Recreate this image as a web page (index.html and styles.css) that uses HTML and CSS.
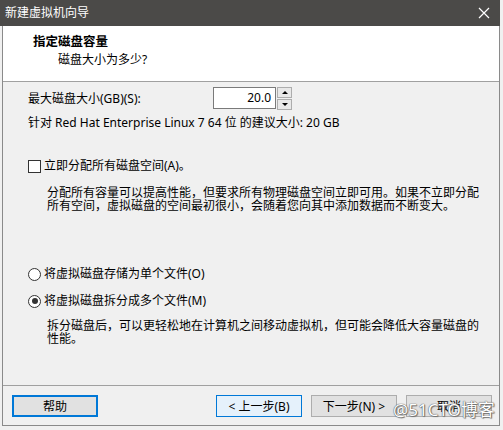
FILE: index.html
```html
<!DOCTYPE html>
<html lang="zh-CN">
<head>
    <meta charset="UTF-8">
    <title>新建虚拟机向导</title>
    <link rel="stylesheet" href="styles.css">
</head>
<body>
    <div class="window">
        <div class="titlebar">
            <span class="title">新建虚拟机向导</span>
            <svg class="close" width="12" height="12" viewBox="0 0 12 12">
                <path d="M1 1 L11 11 M11 1 L1 11" stroke="#fff" stroke-width="1.2" fill="none"/>
            </svg>
        </div>

        <div class="frame">
            <div class="header">
                <div class="header-title">指定磁盘容量</div>
                <div class="header-sub">磁盘大小为多少?</div>
            </div>

            <div class="content">
                <div class="size-row">
                    <span class="size-label">最大磁盘大小(GB)(S):</span>
                    <div class="spin">
                        <div class="spin-input">20.0</div>
                        <div class="spin-buttons">
                            <div class="spin-btn"><span class="arrow-up"></span></div>
                            <div class="spin-btn"><span class="arrow-down"></span></div>
                        </div>
                    </div>
                </div>
                <div class="hint">针对 Red Hat Enterprise Linux 7 64 位 的建议大小: 20 GB</div>

                <div class="option check-row">
                    <span class="checkbox"></span>
                    <span>立即分配所有磁盘空间(A)。</span>
                </div>
                <p class="note note-alloc">分配所有容量可以提高性能，但要求所有物理磁盘空间立即可用。如果不立即分配所有空间，虚拟磁盘的空间最初很小，会随着您向其中添加数据而不断变大。</p>

                <div class="option radio-first">
                    <span class="radio"></span>
                    <span>将虚拟磁盘存储为单个文件(O)</span>
                </div>
                <div class="option radio-second">
                    <span class="radio checked"></span>
                    <span>将虚拟磁盘拆分成多个文件(M)</span>
                </div>
                <p class="note note-split">拆分磁盘后，可以更轻松地在计算机之间移动虚拟机，但可能会降低大容量磁盘的性能。</p>
            </div>

            <div class="footer">
                <button class="btn btn-default">帮助</button>
                <div class="spacer"></div>
                <button class="btn btn-hover">&lt; 上一步(B)</button>
                <button class="btn">下一步(N) &gt;</button>
                <button class="btn">取消</button>
            </div>
        </div>

        <div class="watermark">@51CTO博客</div>
    </div>
</body>
</html>
```

FILE: styles.css
```css
/* Общий стиль окна */
body {
    margin: 0;
    background: #f0f0f0;
    font-family: "Noto Sans", "Noto Sans CJK SC", sans-serif;
    font-size: 12px;
    color: #000;
}

.window {
    position: relative;
    width: 500px;
}

/* Заголовок окна */
.titlebar {
    height: 26px;
    background: #4b4a48;
    display: flex;
    align-items: center;
    justify-content: space-between;
    padding: 0 10px 0 5px;
    box-sizing: border-box;
}

.title {
    color: #fff;
    font-size: 12px;
    line-height: 16px;
}

.close {
    display: block;
}

.frame {
    margin-left: 2px;
    width: 496px;
    border: 1px solid #8a8a8a;
    border-top: none;
}

/* Шапка мастера */
.header {
    background: #fff;
    height: 56px;
    padding: 8px 0 0 30px;
    box-sizing: border-box;
    border-bottom: 1px solid #a0a0a0;
}

.header-title {
    font-weight: bold;
    font-size: 12.5px;
    line-height: 16px;
}

.header-sub {
    margin-top: 2px;
    padding-left: 25px;
    line-height: 16px;
}

/* Основная часть */
.content {
    height: 304px;
    padding: 5px 0 0 25px;
    box-sizing: border-box;
    border-bottom: 1px solid #a0a0a0;
}

.size-row {
    display: flex;
    align-items: center;
    height: 22px;
}

.size-label {
    width: 185px;
    line-height: 16px;
    padding-top: 2px;
}

.spin {
    display: flex;
    align-items: center;
    gap: 1px;
}

.spin-input {
    width: 57px;
    height: 20px;
    border: 1px solid #7a7a7a;
    background: #fff;
    text-align: right;
    line-height: 20px;
    padding-right: 4px;
    font-size: 12px;
}

.spin-buttons {
    display: flex;
    flex-direction: column;
    gap: 1px;
}

.spin-btn {
    width: 13px;
    height: 9px;
    border: 1px solid #adadad;
    background: #e8e8e8;
    display: flex;
    align-items: center;
    justify-content: center;
}

.arrow-up {
    border-left: 3px solid transparent;
    border-right: 3px solid transparent;
    border-bottom: 3px solid #000;
}

.arrow-down {
    border-left: 3px solid transparent;
    border-right: 3px solid transparent;
    border-top: 3px solid #000;
}

.hint {
    margin-top: 6px;
    line-height: 16px;
}

/* Флажок и переключатели */
.option {
    display: flex;
    align-items: center;
    gap: 3px;
    line-height: 16px;
}

.check-row {
    margin-top: 27px;
}

.radio-first {
    margin-top: 54px;
}

.radio-second {
    margin-top: 11px;
}

.checkbox {
    width: 11px;
    height: 11px;
    border: 1px solid #333;
    background: #fff;
}

.radio {
    width: 11px;
    height: 11px;
    border: 1px solid #333;
    border-radius: 50%;
    background: #fff;
    display: flex;
    align-items: center;
    justify-content: center;
}

.radio.checked::after {
    content: "";
    width: 6px;
    height: 6px;
    border-radius: 50%;
    background: #333;
}

.note {
    margin: 12px 0 0 19px;
    width: 440px;
    line-height: 13px;
}

.note-split {
    margin-top: 10px;
}

/* Кнопки внизу */
.footer {
    display: flex;
    gap: 9px;
    padding: 9px 7px 8px 9px;
}

.spacer {
    flex: 1;
}

.btn {
    width: 86px;
    height: 22px;
    border: 1px solid #adadad;
    background: #e1e1e1;
    font-family: inherit;
    font-size: 12px;
    color: #000;
    padding: 0;
    margin: 0;
}

.btn-default {
    border: 2px solid #0078d7;
}

.btn-hover {
    border-color: #0078d7;
    background: #e5f1fb;
}

/* Водяной знак */
.watermark {
    position: absolute;
    left: 393px;
    top: 400px;
    font-size: 17px;
    color: #fff;
    text-shadow: 0 0 1px #555, 0 0 1px #555, 1px 1px 1px #777;
    line-height: 20px;
}
```
